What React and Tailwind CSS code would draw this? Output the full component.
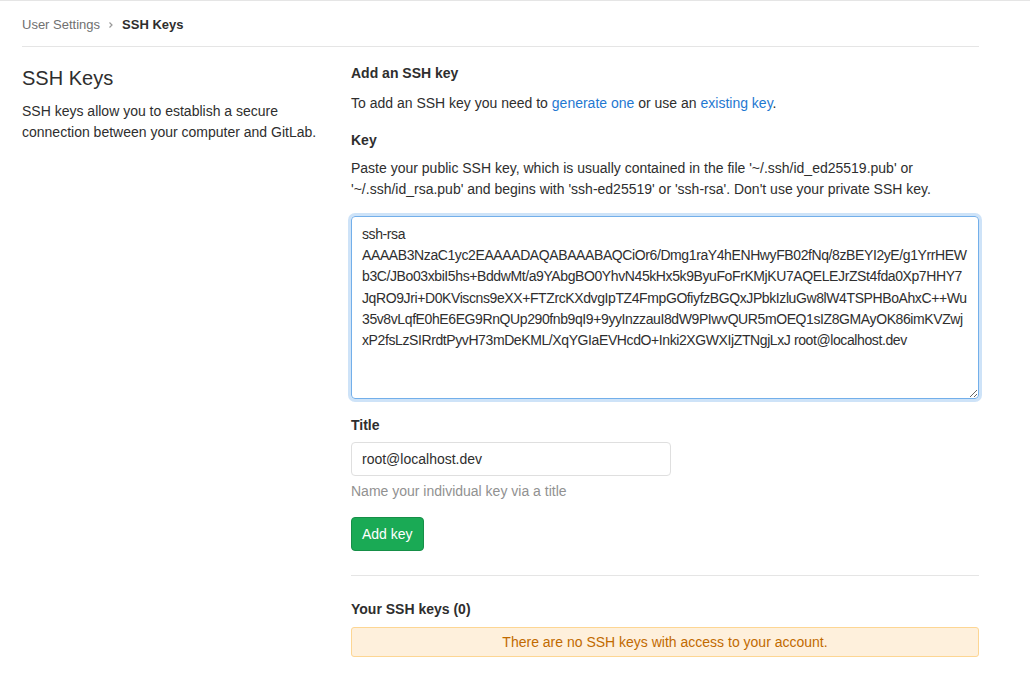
const KEY_VALUE = [
  'ssh-rsa',
  'AAAAB3NzaC1yc2EAAAADAQABAAABAQCiOr6/Dmg1raY4hENHwyFB02fNq/8zBEYI2yE/g1YrrHEW',
  'b3C/JBo03xbiI5hs+BddwMt/a9YAbgBO0YhvN45kHx5k9ByuFoFrKMjKU7AQELEJrZSt4fda0Xp7HHY7',
  'JqRO9Jri+D0KViscns9eXX+FTZrcKXdvgIpTZ4FmpGOfiyfzBGQxJPbkIzluGw8lW4TSPHBoAhxC++Wu',
  '35v8vLqfE0hE6EG9RnQUp290fnb9qI9+9yyInzzauI8dW9PIwvQUR5mOEQ1sIZ8GMAyOK86imKVZwj',
  'xP2fsLzSIRrdtPyvH73mDeKML/XqYGIaEVHcdO+Inki2XGWXIjZTNgjLxJ root@localhost.dev',
].join('\n');

const font = { fontFamily: '"Liberation Sans", Arial, sans-serif' };

export default function App() {
  return (
    <div className="min-h-[673px] bg-white text-[#2e2e2e] text-[14px] border-t border-[#e5e5e5]" style={font}>
      <div className="mx-[22px] w-[957px]">
        {/* breadcrumb */}
        <div className="flex items-center h-[46px] pt-[2px] border-b border-[#e5e5e5] text-[13px]">
          <span className="text-[#707070]">User Settings</span>
          <svg className="mx-[7px] text-[#999]" width="8" height="8" viewBox="0 0 8 8" fill="none">
            <path d="M2.5 1.5 5 4 2.5 6.5" stroke="currentColor" strokeWidth="1.2" />
          </svg>
          <span className="font-semibold text-[#2e2e2e]">SSH Keys</span>
        </div>

        <div className="flex pt-[16px]">
          {/* left column */}
          <div className="w-[329px] shrink-0 pr-[20px]">
            <h4 className="text-[20px] leading-[28px] mt-[1px] mb-[9px]">SSH Keys</h4>
            <p className="leading-[21px]">
              SSH keys allow you to establish a secure connection between your computer and GitLab.
            </p>
          </div>

          {/* right column */}
          <div className="flex-1">
            <h5 className="font-semibold leading-[20px] mb-[10px]">Add an SSH key</h5>
            <p className="leading-[21px]">
              To add an SSH key you need to{' '}
              <a className="text-[#1f78d1]">generate one</a> or use an{' '}
              <a className="text-[#1f78d1]">existing key</a>.
            </p>

            <div className="mt-[16px] font-semibold leading-[20px]">Key</div>
            <p className="mt-[8px] leading-[21px]">
              Paste your public SSH key, which is usually contained in the file '~/.ssh/id_ed25519.pub' or
              '~/.ssh/id_rsa.pub' and begins with 'ssh-ed25519' or 'ssh-rsa'. Don't use your private SSH key.
            </p>

            <textarea
              readOnly
              wrap="off"
              value={KEY_VALUE}
              className="block mt-[16px] w-full h-[183px] px-[10px] pt-[7px] pb-[6px] leading-[21.2px] text-[14px] tracking-[-0.4px] text-[#2e2e2e] border border-[#73afea] rounded-[4px] shadow-[0_0_0_3px_rgba(115,175,234,0.35)] outline-none overflow-hidden whitespace-pre"
              style={font}
            />

            <div className="mt-[16px] font-semibold leading-[20px]">Title</div>
            <input
              readOnly
              value="root@localhost.dev"
              className="block mt-[7px] w-[320px] h-[34px] px-[10px] text-[14px] text-[#2e2e2e] border border-[#dfdfdf] rounded-[4px] outline-none"
              style={font}
            />
            <div className="mt-[5px] text-[#919191] leading-[20px]">Name your individual key via a title</div>

            <button
              className="mt-[16px] h-[34px] px-[10px] bg-[#1aaa55] border border-[#168f48] rounded-[4px] text-white text-[14px]"
              style={font}
            >
              Add key
            </button>

            <div className="mt-[24px] border-t border-[#e5e5e5]" />

            <h5 className="mt-[23px] font-semibold leading-[20px]">Your SSH keys (0)</h5>
            <div className="mt-[8px] h-[30px] flex items-center justify-center bg-[#fef0dc] border border-[#fdd693] rounded-[3px] text-[#c16a00]">
              There are no SSH keys with access to your account.
            </div>
          </div>
        </div>
      </div>
    </div>
  );
}
